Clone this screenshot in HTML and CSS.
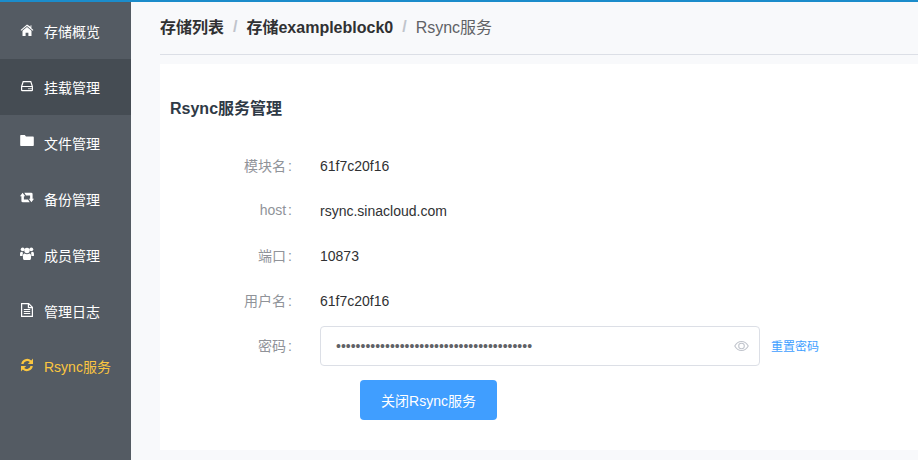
FILE: index.html
```html
<!DOCTYPE html>
<html lang="zh-CN">
<head>
<meta charset="utf-8">
<title>Rsync服务</title>
<link rel="stylesheet" href="styles.css">
</head>
<body>
<div class="app">
  <aside class="sidebar">
    <a class="nav-item"><svg class="ico" viewBox="0 0 14 14"><path d="M7 1.600 0.600 7l.7.800L7 3.100l5.700 4.700.7-.8-2-1.700V2.200H10.600v1.600ZM7 4 2.500 7.700V13h3.100V9.800h2.800V13h3.100V7.700Z"/></svg><span>存储概览</span></a>
    <a class="nav-item active"><svg class="ico" viewBox="0 0 14 14"><path class="line" d="M1.600 7.500 3.200 2.600h7.600L12.400 7.500V11a.7.700 0 0 1-.7.700H2.300a.7.700 0 0 1-.7-.7Z M1.600 7.500H12.400"/><path d="M8.400 9.100h1.200v1.200H8.400ZM10.400 9.100h1.200v1.200H10.400Z"/></svg><span>挂载管理</span></a>
    <a class="nav-item"><svg class="ico" viewBox="0 0 14 14"><path d="M1.200 0h3.600l1.200 1.500h6.800c.6 0 1 .4 1 1V10c0 .6-.4 1-1 1H1.200c-.6 0-1-.4-1-1V1c0-.6.4-1 1-1Z"/></svg><span>文件管理</span></a>
    <a class="nav-item"><svg class="ico" viewBox="0 0 14 14"><path d="M0 5.200 2.600 1.800 5.200 5.200H3.900V8.400H8L9.700 11.200H2.900Q1.400 11.200 1.400 10V5.200ZM14 7.800 11.400 11.200 8.800 7.800H10.100V4.600H6L4.300 1.800H11.100Q12.600 1.800 12.600 3V7.800Z"/></svg><span>备份管理</span></a>
    <a class="nav-item"><svg class="ico" viewBox="0 0 14 14"><circle cx="2.700" cy="2.300" r="1.900"/><circle cx="11.300" cy="2.300" r="1.900"/><circle cx="7" cy="3.500" r="2.700"/><path d="M0 8.500C0 5.500.4 4.800 1.500 4.800c.5.500 1 .7 1.600.7-.4.900-.5 2-.5 3.500H1C.4 9 0 8.900 0 8.500ZM14 8.500c0-3-.4-3.700-1.500-3.700-.5.500-1 .7-1.600.7.400.9.500 2 .5 3.500H13c.6 0 1-.1 1-.5ZM4.600 6.500c.7.500 1.500.8 2.400.8s1.700-.3 2.400-.8c1.100 0 1.700 1 1.700 3.700 0 2-.6 2.800-1.900 2.800H4.800c-1.300 0-1.900-.8-1.900-2.800 0-2.700.6-3.700 1.700-3.700Z"/></svg><span>成员管理</span></a>
    <a class="nav-item"><svg class="ico" viewBox="0 0 14 14"><path class="line" d="M1.600.6H8.700L12.400 4.300V13.400H1.600Z M8.400.8V4.600H12.400"/><path d="M3.800 6H10.200V7H3.800ZM3.800 8H10.200V9H3.800ZM3.800 10H10.200V11H3.800Z"/></svg><span>管理日志</span></a>
    <a class="nav-item current"><svg class="ico" viewBox="0 0 14 14"><path d="M13 .5V6H7.800L9.800 4.100A3.700 3.700 0 0 0 3.500 6H1.200A6 6 0 0 1 11.300 2.500ZM1 13.500V8H6.200L4.200 9.900A3.700 3.700 0 0 0 10.500 8H12.800A6 6 0 0 1 2.700 11.500Z"/></svg><span>Rsync服务</span></a>
  </aside>
  <main class="main">
    <nav class="crumbs">
      <a class="crumb">存储列表</a><i class="sep">/</i>
      <a class="crumb">存储exampleblock0</a><i class="sep">/</i>
      <span class="crumb-now">Rsync服务</span>
    </nav>
    <section class="card">
      <h2 class="title">Rsync服务管理</h2>
      <div class="row"><label class="lbl">模块名<span class="colon">:</span></label><span class="val">61f7c20f16</span></div>
      <div class="row"><label class="lbl">host<span class="colon">:</span></label><span class="val">rsync.sinacloud.com</span></div>
      <div class="row"><label class="lbl">端口<span class="colon">:</span></label><span class="val">10873</span></div>
      <div class="row"><label class="lbl">用户名<span class="colon">:</span></label><span class="val">61f7c20f16</span></div>
      <div class="row row-input">
        <label class="lbl">密码<span class="colon">:</span></label>
        <div class="input">
          <span class="dots">••••••••••••••••••••••••••••••••••••••••</span>
          <svg class="eye" viewBox="0 0 16 12"><path d="M.8 6C2.500 2.800 5 1.200 8 1.200S13.500 2.800 15.200 6C13.500 9.200 11 10.800 8 10.800S2.500 9.200.8 6Z"/><circle cx="8" cy="6" r="3"/></svg>
        </div>
        <a class="reset">重置密码</a>
      </div>
      <button class="btn">关闭Rsync服务</button>
    </section>
  </main>
</div>
</body>
</html>
```
FILE: styles.css
```css
* { box-sizing: border-box; }
html, body { margin: 0; height: 100%; overflow: hidden; }
body {
  font-family: "Liberation Sans", "Noto Sans CJK SC", sans-serif;
  font-size: 14px;
  color: #303133;
  background: #f8f9fb;
}
.app {
  display: flex;
  width: 918px;
  height: 460px;
  border-top: 2px solid #1b8ccb;
}
.sidebar {
  width: 131px;
  flex: none;
  background: #545b63;
  padding-top: 1px;
}
.nav-item {
  display: flex;
  align-items: center;
  height: 56px;
  padding-left: 20px;
  color: #fff;
  font-size: 14px;
}
.nav-item.active { background: #454c53; }
.nav-item.current { color: #fbc640; margin-top: -1px; }
.ico {
  width: 14px;
  height: 14px;
  margin-right: 10px;
  margin-bottom: 2px;
  fill: currentColor;
  flex: none;
}
.ico .line { fill: none; stroke: currentColor; stroke-width: 1.2; }
.main {
  flex: 1;
  min-width: 0;
  padding-left: 29px;
}
.crumbs {
  display: flex;
  align-items: center;
  height: 53px;
  padding-bottom: 5px;
  border-bottom: 1px solid #dcdfe6;
  font-size: 16px;
}
.crumb { font-weight: 700; color: #303133; }
.sep { font-style: normal; color: #c0c4cc; margin: 3px 9px 0; font-weight: 700; }
.crumb-now { color: #606266; }
.card {
  margin-top: 9px;
  height: 386px;
  background: #fff;
  padding: 35px 0 0 10px;
}
.title {
  margin: 0 0 24px;
  font-size: 16px;
  line-height: 20px;
  color: #2f3a46;
  font-weight: 700;
}
.row {
  display: flex;
  align-items: center;
  height: 45px;
  font-size: 14px;
}
.lbl {
  width: 122px;
  text-align: right;
  margin-right: 28px;
  margin-bottom: 2px;
  color: #909399;
}
.colon { margin-left: 2px; }
.val { color: #303133; }
.row-input { height: 40px; margin-top: 3px; }
.input {
  display: flex;
  align-items: center;
  justify-content: space-between;
  width: 440px;
  height: 40px;
  padding: 0 10px 0 15px;
  border: 1px solid #dcdfe6;
  border-radius: 4px;
}
.dots { color: #606266; font-size: 14px; }
.eye { width: 15px; height: 12px; fill: none; stroke: #c0c4cc; stroke-width: 1.1; }
.reset { margin-left: 11px; margin-bottom: 2px; font-size: 12px; color: #409eff; }
.btn {
  display: block;
  width: 137px;
  height: 40px;
  margin: 14px 0 0 190px;
  padding-bottom: 2px;
  border: 0;
  border-radius: 4px;
  background: #409eff;
  color: #fff;
  font: inherit;
  font-size: 14px;
}
```
